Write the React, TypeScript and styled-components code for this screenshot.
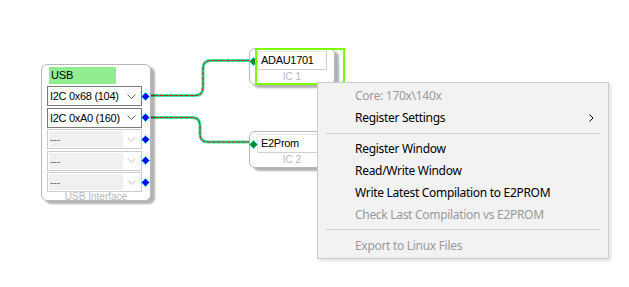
import React from "react";
import styled, { createGlobalStyle } from "styled-components";

const Global = createGlobalStyle`
  html, body { margin: 0; padding: 0; background: #ffffff; }
  body { font-family: "Liberation Sans", Arial, sans-serif; }
`;

const Canvas = styled.div`
  position: relative;
  width: 629px;
  height: 287px;
  overflow: hidden;
  background: #ffffff;
`;

const WireLayer = styled.svg`
  position: absolute;
  left: 0;
  top: 0;
  pointer-events: none;
`;

const Node = styled.div<{ $x: number; $y: number; $w: number; $h: number }>`
  position: absolute;
  left: ${(p) => p.$x}px;
  top: ${(p) => p.$y}px;
  width: ${(p) => p.$w}px;
  height: ${(p) => p.$h}px;
  box-sizing: border-box;
  background: #ffffff;
  border: 1px solid #b9b9b9;
  border-radius: 6px;
  box-shadow: 4px 3px 2px rgba(0, 0, 0, 0.3);
  display: flex;
  flex-direction: column;
`;

const UsbBody = styled.div`
  display: flex;
  flex-direction: column;
  padding: 2px 0 0 5px;
`;

const UsbTitle = styled.div`
  margin-left: 2px;
  width: 67px;
  height: 17px;
  background: #90ee90;
  font-size: 11px;
  letter-spacing: -0.2px;
  line-height: 17px;
  padding-left: 2px;
  box-sizing: border-box;
  color: #000;
`;

const Rows = styled.div`
  margin-top: 2px;
  display: flex;
  flex-direction: column;
  gap: 1.5px;
`;

const Row = styled.div`
  display: flex;
  align-items: center;
  height: 20px;
`;

const Combo = styled.div<{ $disabled?: boolean }>`
  width: 96px;
  height: 20px;
  box-sizing: border-box;
  border: 1px solid ${(p) => (p.$disabled ? "#cccccc" : "#7a7a7a")};
  background: #ffffff;
  display: flex;
  align-items: center;
  padding: 1px;
`;

const ComboField = styled.div<{ $disabled?: boolean }>`
  width: 74px;
  height: 100%;
  background: ${(p) => (p.$disabled ? "#f0f0f0" : "transparent")};
  color: ${(p) => (p.$disabled ? "#6d6d6d" : "#000")};
  font-size: 11px;
  letter-spacing: -0.3px;
  line-height: 16px;
  padding-left: 1px;
  white-space: nowrap;
  box-sizing: border-box;
`;

const ComboArrow = styled.svg`
  margin-left: auto;
  margin-right: 4px;
`;

const PinBox = styled.svg`
  flex: none;
  margin-left: -1px;
`;

const Caption = styled.div`
  text-align: center;
  font-size: 10px;
  color: #b8b8b8;
  line-height: 10px;
`;

const IcField = styled.div`
  margin: 2px 0 0 7px;
  width: 70px;
  height: 19px;
  box-sizing: border-box;
  border: 1px solid #d0d0d0;
  border-top-color: #e4e4e4;
  border-left-color: #e4e4e4;
  font-size: 11px;
  letter-spacing: -0.3px;
  line-height: 17px;
  padding-left: 3px;
  color: #000;
`;

const IcCaption = styled.div`
  text-align: center;
  font-size: 10px;
  color: #b8b8b8;
  line-height: 13px;
`;

const IcPin = styled.svg`
  position: absolute;
  left: -1px;
  top: 8px;
`;

const Selection = styled.div`
  position: absolute;
  left: 255px;
  top: 48px;
  width: 90px;
  height: 37px;
  box-sizing: border-box;
  border: 2px solid #7cfc00;
  pointer-events: none;
`;

const Menu = styled.div`
  position: absolute;
  left: 317px;
  top: 82px;
  width: 292px;
  height: 177px;
  box-sizing: border-box;
  background: #f2f2f2;
  border: 1px solid #cccccc;
  box-shadow: 2px 2px 3px rgba(0, 0, 0, 0.12);
  padding: 2px 0;
  display: flex;
  flex-direction: column;
  font-family: "Noto Sans", "Open Sans", sans-serif;
  font-size: 12px;
  letter-spacing: -0.3px;
`;

const Item = styled.div<{ $disabled?: boolean }>`
  height: 22px;
  display: flex;
  align-items: center;
  padding: 0 14px 0 37px;
  color: ${(p) => (p.$disabled ? "#9a9a9a" : "#000000")};
  white-space: nowrap;
`;

const ItemLabel = styled.span`
  flex: 1;
`;

const Separator = styled.div`
  height: 9px;
  display: flex;
  align-items: center;
  padding: 0 8px 0 8px;
  &::after {
    content: "";
    flex: 1;
    height: 1px;
    background: #d2d2d2;
  }
`;

const Pin = ({ color = "#0000ff" }: { color?: string }) => (
  <PinBox width="9" height="9" viewBox="0 0 9 9">
    <polygon points="4.5,0.5 8.5,4.5 4.5,8.5 0.5,4.5" fill={color} stroke="#22ccff" strokeWidth="1" />
  </PinBox>
);

const Arrow = ({ light }: { light?: boolean }) => (
  <ComboArrow width="9" height="5" viewBox="0 0 9 5">
    <polyline points="0.5,0.5 4.5,4.5 8.5,0.5" fill="none" stroke={light ? "#c4c4c4" : "#606060"} strokeWidth="1" />
  </ComboArrow>
);

const Wire = ({ d }: { d: string }) => (
  <g fill="none">
    <path d={d} stroke="#3ae6a0" strokeWidth="3" />
    <path d={d} stroke="#13a85c" strokeWidth="1" />
    <path d={d} stroke="#ff1010" strokeWidth="1" strokeDasharray="3 2" />
  </g>
);

const rows = [
  { label: "I2C 0x68 (104)", disabled: false },
  { label: "I2C 0xA0 (160)", disabled: false },
  { label: "---", disabled: true },
  { label: "---", disabled: true },
  { label: "---", disabled: true },
];

const IcNode = ({ y, name, caption }: { y: number; name: string; caption: string }) => (
  <Node $x={249} $y={y} $w={86} $h={37}>
    <IcField>{name}</IcField>
    <IcCaption>{caption}</IcCaption>
    <IcPin width="9" height="9" viewBox="0 0 9 9">
      <polygon points="4.5,0.5 8.5,4.5 4.5,8.5 0.5,4.5" fill="#008a2e" stroke="#22ddcc" strokeWidth="1" />
    </IcPin>
  </Node>
);

export default function App() {
  return (
    <>
      <Global />
      <Canvas>
        <WireLayer width="629" height="287">
          <Wire d="M150 95.5 H195 Q203 95.5 203 87.5 V68.5 Q203 60.5 211 60.5 H252" />
          <Wire d="M150 117.5 H192 Q200 117.5 200 125.5 V134 Q200 142 208 142 H252" />
        </WireLayer>

        <Node $x={41} $y={64} $w={110} $h={137}>
          <UsbBody>
            <UsbTitle>USB</UsbTitle>
            <Rows>
              {rows.map((r, i) => (
                <Row key={i}>
                  <Combo $disabled={r.disabled}>
                    <ComboField $disabled={r.disabled}>{r.label}</ComboField>
                    <Arrow light={r.disabled} />
                  </Combo>
                  <Pin />
                </Row>
              ))}
            </Rows>
          </UsbBody>
          <Caption>USB Interface</Caption>
        </Node>

        <IcNode y={48} name="ADAU1701" caption="IC 1" />
        <IcNode y={131} name="E2Prom" caption="IC 2" />
        <Selection />

        <Menu>
          <Item $disabled>
            <ItemLabel>Core: 170x\140x</ItemLabel>
          </Item>
          <Item>
            <ItemLabel>Register Settings</ItemLabel>
            <svg width="5" height="8" viewBox="0 0 5 8">
              <polyline points="0.5,0.5 4,4 0.5,7.5" fill="none" stroke="#000" strokeWidth="1" />
            </svg>
          </Item>
          <Separator />
          <Item>
            <ItemLabel>Register Window</ItemLabel>
          </Item>
          <Item>
            <ItemLabel>Read/Write Window</ItemLabel>
          </Item>
          <Item>
            <ItemLabel>Write Latest Compilation to E2PROM</ItemLabel>
          </Item>
          <Item $disabled>
            <ItemLabel>Check Last Compilation vs E2PROM</ItemLabel>
          </Item>
          <Separator />
          <Item $disabled>
            <ItemLabel>Export to Linux Files</ItemLabel>
          </Item>
        </Menu>
      </Canvas>
    </>
  );
}
